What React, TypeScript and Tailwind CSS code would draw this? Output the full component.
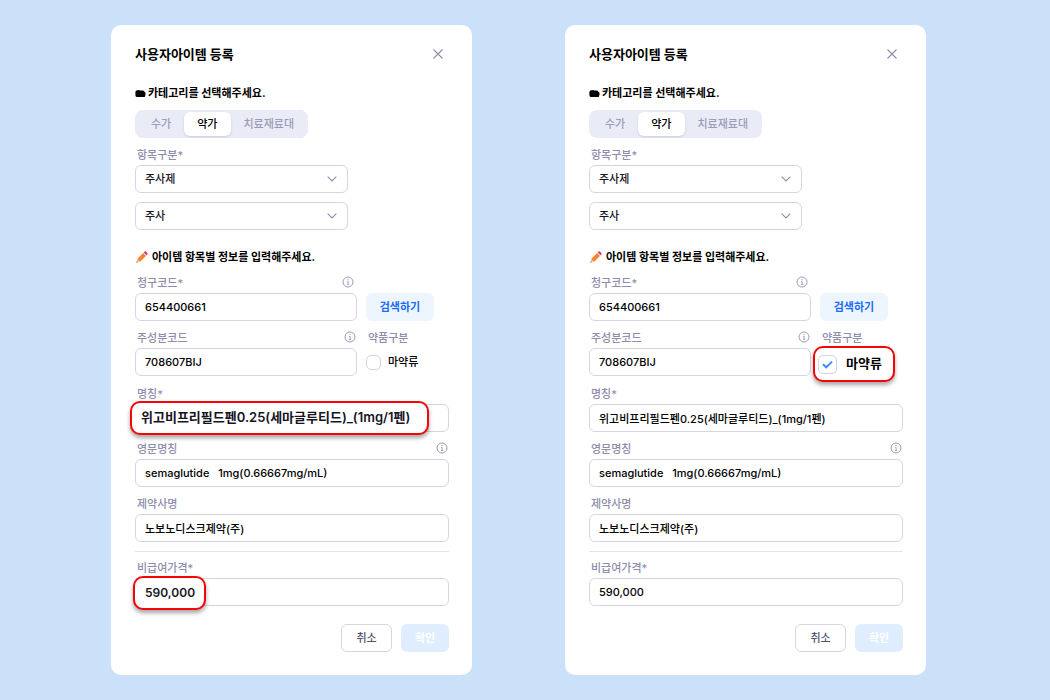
import { useId, useState } from 'react';
import type { ReactNode } from 'react';
import clsx from 'clsx';

const categories = ['수가', '약가', '치료재료대'];

function FolderIcon() {
  return (
    <svg viewBox="0 0 11 9" className="h-[9px] w-[11px] shrink-0" fill="#000">
      <path d="M0.4 3Q0.6 1.2 2.2 1.2H3.4Q4.4 0.7 5.3 1.6H7.8Q8.8 1.6 9.2 2.4Q10.6 2.7 10.5 4.3V5.4Q10.4 8.1 8.4 8.1H2.4Q0.4 8.1 0.4 6.2Z" />
    </svg>
  );
}

function PencilIcon() {
  return (
    <svg viewBox="0 0 12 12" className="size-3 shrink-0">
      <path d="M0.4 11.6L1.2 7.9L4.1 10.8Z" fill="#f3c6a3" />
      <path d="M0.4 11.6L0.7 10.2L1.8 11.3Z" fill="#444" />
      <path d="M1.2 7.9L7 2.1L9.9 5L4.1 10.8Z" fill="#ff822d" />
      <path d="M7 2.1L7.8 1.3L10.7 4.2L9.9 5Z" fill="#b9c3cf" />
      <path d="M7.8 1.3L8.5 0.6Q9.3 0 10 0.6L11.4 2Q12 2.7 11.4 3.5L10.7 4.2Z" fill="#f5325f" />
    </svg>
  );
}

function InfoIcon() {
  return (
    <svg viewBox="0 0 12 12" className="size-3 shrink-0" fill="none" stroke="#9c9bb8">
      <circle cx="6" cy="6" r="5" />
      <path d="M5 5.4H6.1V8.3M4.9 8.4H7.2" strokeWidth="0.9" />
      <circle cx="6" cy="3.6" r="0.7" fill="#9c9bb8" stroke="none" />
    </svg>
  );
}

function Chevron() {
  return (
    <svg
      viewBox="0 0 10 6"
      className="pointer-events-none absolute right-[11px] top-[11px] h-[6px] w-[10px]"
      fill="none"
      stroke="#8e8dac"
      strokeWidth="1.1"
    >
      <path d="M0.7 0.7L5 5L9.3 0.7" />
    </svg>
  );
}

// Red callout frame drawn over the field it points at
function Callout({ className, children }: { className: string; children: ReactNode }) {
  return (
    <div
      className={clsx(
        'absolute z-10 flex items-center rounded-[10px] border-2 border-[#f50505] bg-white shadow-[0_3px_4px_rgba(0,0,0,0.35)]',
        className
      )}
    >
      {children}
    </div>
  );
}

function Select({ id, label, value }: { id?: string; label?: string; value: string }) {
  return (
    <div className="relative w-[213px]">
      <select
        id={id}
        aria-label={label}
        className="block h-7 w-full appearance-none rounded-md border border-[#d6d5e6] bg-white px-[9px] text-[11px] font-medium text-[#15151f]"
      >
        <option>{value}</option>
      </select>
      <Chevron />
    </div>
  );
}

interface FieldProps {
  label: string;
  value: string;
  info?: string;
  callout?: string;
  className?: string;
}

function Field({ label, value, info, callout, className }: FieldProps) {
  const id = useId();

  return (
    <div className={className}>
      <div className={clsx('flex h-[18px] items-start justify-between pl-0.5', info)}>
        <label htmlFor={id} className="text-[11px] font-medium leading-4 text-[#8e8dac]">
          {label}
        </label>
        {info && (
          <span className="pt-px">
            <InfoIcon />
          </span>
        )}
      </div>
      <div className="relative h-7 rounded-md border border-[#d6d5e6] bg-white">
        {callout ? (
          <Callout className={callout}>
            <input
              id={id}
              defaultValue={value}
              className="w-full bg-transparent font-semibold text-[#15151f] outline-none"
            />
          </Callout>
        ) : (
          <input
            id={id}
            defaultValue={value}
            className="block h-full w-full rounded-md bg-transparent px-[9px] text-[11px] font-medium text-black outline-none"
          />
        )}
      </div>
    </div>
  );
}

function Checkbox({ label, defaultChecked, large }: { label: string; defaultChecked: boolean; large?: boolean }) {
  return (
    <label
      className={clsx(
        'flex items-center text-black',
        large ? 'gap-[9px] text-[13px] font-semibold' : 'gap-[7px] text-[11px] font-medium'
      )}
    >
      <span className={clsx('relative block', large ? 'size-[19px]' : 'size-[15px]')}>
        <input
          type="checkbox"
          defaultChecked={defaultChecked}
          className="peer block size-full appearance-none rounded-[5px] border border-[#d3d2e3] bg-white"
        />
        <svg
          viewBox="0 0 19 19"
          className="pointer-events-none absolute inset-0 hidden size-full peer-checked:block"
          fill="none"
          stroke="#3b8bff"
          strokeWidth="1.9"
        >
          <path d="M5 9.2L8.2 12.3L14 6.6" />
        </svg>
      </span>
      {label}
    </label>
  );
}

function ItemForm({ step }: { step: 'fill' | 'narcotic' }) {
  const [category, setCategory] = useState('약가');
  const selectId = useId();
  const filling = step === 'fill';

  return (
    <form className="min-w-0 flex-1 rounded-[10px] bg-white pb-[23px] pl-6 pr-[23px] pt-[19px]">
      <div className="flex h-5 items-center justify-between">
        <h1 className="text-[13px] font-bold leading-5 text-black">사용자아이템 등록</h1>
        <button type="button" aria-label="닫기" className="mr-[6px]">
          <svg viewBox="0 0 10 10" className="size-[10px]" fill="none" stroke="#8e8dac" strokeWidth="1.1">
            <path d="M0.5 0.5L9.5 9.5M9.5 0.5L0.5 9.5" />
          </svg>
        </button>
      </div>

      <h2 className="mt-[21px] flex h-4 items-center gap-[2px] text-[11px] font-bold leading-4 text-black">
        <FolderIcon />
        카테고리를 선택해주세요.
      </h2>

      <div className="mt-[9px] flex h-7 w-fit rounded-lg bg-[#e9ebf7] py-[2px] pl-[3px] pr-px">
        {categories.map((item) => (
          <button
            key={item}
            type="button"
            onClick={() => setCategory(item)}
            className={clsx(
              'rounded-md px-[13px] text-[11px] font-medium leading-4',
              item === category ? 'bg-white text-black shadow-sm' : 'text-[#9c9bb8]'
            )}
          >
            {item}
          </button>
        ))}
      </div>

      <label
        htmlFor={selectId}
        className="mt-[9px] block h-[18px] pl-0.5 text-[11px] font-medium leading-4 text-[#8e8dac]"
      >
        항목구분*
      </label>
      <div className="flex flex-col gap-[9px]">
        <Select id={selectId} value="주사제" />
        <Select label="세부 항목" value="주사" />
      </div>

      <h2 className="mt-[19px] flex h-4 items-center gap-1 pl-px text-[11px] font-bold leading-4 text-black">
        <PencilIcon />
        아이템 항목별 정보를 입력해주세요.
      </h2>

      <div className="mt-[10px] flex flex-col gap-[9px]">
        <div className="flex items-end gap-[9px]">
          <Field label="청구코드*" value="654400661" info="pr-[3px]" className="min-w-0 flex-1" />
          <button
            type="button"
            className="mr-[15px] h-7 w-[68px] rounded-md bg-[#edf6ff] text-[11px] font-semibold text-[#1a6dff]"
          >
            검색하기
          </button>
        </div>
        <div className="flex gap-[9px]">
          <Field label="주성분코드" value="708607BIJ" info="pr-px" className="min-w-0 flex-1" />
          <div className="relative w-[83px]">
            <div className="h-[18px] pl-0.5 text-[11px] font-medium leading-4 text-[#8e8dac]">약품구분</div>
            {filling ? (
              <div className="flex h-7 items-center">
                <Checkbox label="마약류" defaultChecked={false} />
              </div>
            ) : (
              <Callout className="-left-[7px] top-4 h-9 w-[82px] pl-[3px]">
                <Checkbox label="마약류" defaultChecked large />
              </Callout>
            )}
          </div>
        </div>
      </div>

      <div className="mt-[10px] flex flex-col gap-[9px]">
        <Field
          label="명칭*"
          value="위고비프리필드펜0.25(세마글루티드)_(1mg/1펜)"
          callout={filling ? '-left-[6px] -top-1 h-[34px] w-[299px] pl-[9px] text-[13px]' : undefined}
        />
        <Field label="영문명칭" value={'semaglutide\u00a0\u00a0 1mg(0.66667mg/mL)'} info="pr-px" />
        <Field label="제약사명" value="노보노디스크제약(주)" />
      </div>

      <hr className="mt-[9px] border-[#e4e3ee]" />

      <Field
        label="비급여가격*"
        value="590,000"
        className="mt-2"
        callout={filling ? '-left-[3px] -top-[3px] h-[34px] w-[73px] pl-[10px] text-xs' : undefined}
      />

      <div className="mt-[18px] flex justify-end gap-[9px]">
        <button
          type="button"
          className="h-7 w-[51px] rounded-md border border-[#d6d5e6] text-[11px] font-medium text-[#55546e]"
        >
          취소
        </button>
        <button type="button" className="h-7 w-12 rounded-md bg-[#e0edff] text-[11px] font-bold text-white">
          확인
        </button>
      </div>
    </form>
  );
}

export default function App() {
  return (
    <main className="flex min-h-screen items-start gap-[93px] bg-[#cbe1fa] py-[25px] pl-[111px] pr-[124px] font-['Inter','Noto_Sans_CJK_KR',sans-serif]">
      <ItemForm step="fill" />
      <ItemForm step="narcotic" />
    </main>
  );
}
